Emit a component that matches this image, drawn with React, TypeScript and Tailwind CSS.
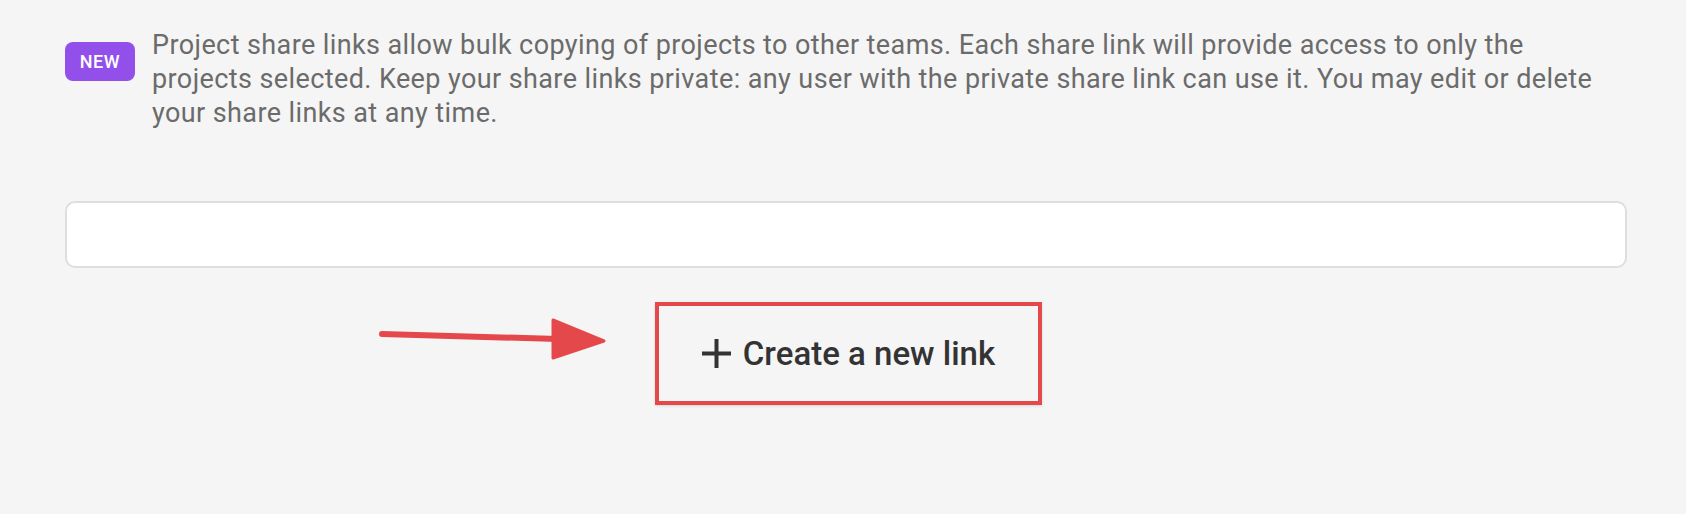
function NewBadge() {
    return (
        <span className="mt-[14px] flex h-[39px] w-[70px] shrink-0 items-center justify-center rounded-[8px] bg-[#934fea] text-[18px] font-medium leading-none tracking-[0.5px] text-white">
            NEW
        </span>
    );
}

function Arrow() {
    return (
        <svg width="232" height="54" viewBox="0 0 232 54" className="mt-[9px] shrink-0">
            <line x1="4" y1="23" x2="180" y2="28" stroke="#e5484a" strokeWidth="6" strokeLinecap="round" />
            <path d="M175 9 L226 30 L175 47 Z" fill="#e5484a" stroke="#e5484a" strokeWidth="3" strokeLinejoin="round" />
        </svg>
    );
}

function PlusIcon() {
    return (
        <svg width="29" height="29" viewBox="0 0 29 29" className="shrink-0">
            <path d="M14.5 0 V29 M0 14.5 H29" stroke="#333333" strokeWidth="4" />
        </svg>
    );
}

export default function App() {
    return (
        <div className="min-h-screen bg-[#f5f5f5] pl-[65px] pt-[28px]" style={{ fontFamily: "Roboto, 'Liberation Sans', sans-serif" }}>
            <div className="flex items-start gap-[17px]">
                <NewBadge />
                <p className="w-[1445px] text-[27px] leading-[34px] tracking-[0.4px] text-[#6b6b6b]">
                    Project share links allow bulk copying of projects to other teams. Each share link will provide access to only the projects selected. Keep your share links private: any user with the private share link can use it. You may edit or delete your share links at any time.
                </p>
            </div>

            <div className="mt-[71px] h-[67px] w-[1562px] rounded-[10px] border-2 border-[#dedede] bg-white" />

            <div className="mt-[34px] flex items-start pl-[313px]">
                <Arrow />
                <button className="ml-[45px] flex h-[103px] w-[387px] items-center justify-center gap-[12px] border-4 border-[#e5484a] text-[33px] font-medium text-[#333333] shadow-sm">
                    <PlusIcon />
                    Create a new link
                </button>
            </div>
        </div>
    );
}
